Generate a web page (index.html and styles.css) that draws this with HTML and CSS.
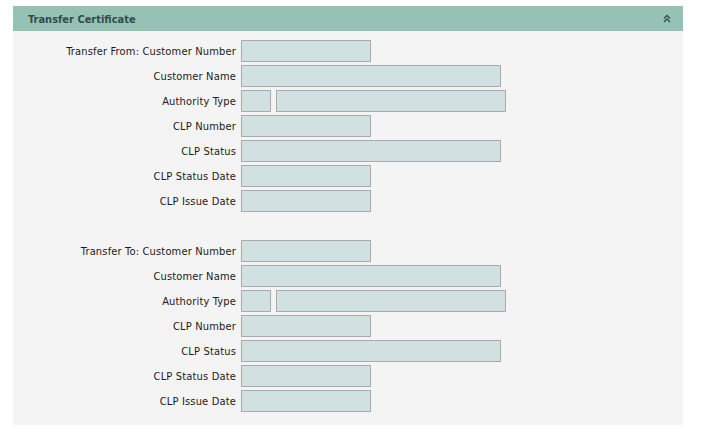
FILE: index.html
```html
<!DOCTYPE html>
<html>
<head>
<meta charset="utf-8">
<link rel="stylesheet" href="styles.css">
</head>
<body>
<div class="panel">
  <div class="panel-header">
    <span class="title">Transfer Certificate</span>
    <svg class="collapse" width="8" height="9" viewBox="0 0 8 9"><path d="M1 4.5 L4 1.5 L7 4.5 M1 8 L4 5 L7 8" fill="none" stroke="#2f4d47" stroke-width="1.4"/></svg>
  </div>
  <div class="panel-body">
    <div class="form">
      <div class="label">Transfer From: Customer Number</div><div class="fields"><span class="box w130"></span></div>
      <div class="label">Customer Name</div><div class="fields"><span class="box w260"></span></div>
      <div class="label">Authority Type</div><div class="fields"><span class="box w30"></span><span class="box w230"></span></div>
      <div class="label">CLP Number</div><div class="fields"><span class="box w130"></span></div>
      <div class="label">CLP Status</div><div class="fields"><span class="box w260"></span></div>
      <div class="label">CLP Status Date</div><div class="fields"><span class="box w130"></span></div>
      <div class="label">CLP Issue Date</div><div class="fields"><span class="box w130"></span></div>
      <div class="spacer"></div>
      <div class="label">Transfer To: Customer Number</div><div class="fields"><span class="box w130"></span></div>
      <div class="label">Customer Name</div><div class="fields"><span class="box w260"></span></div>
      <div class="label">Authority Type</div><div class="fields"><span class="box w30"></span><span class="box w230"></span></div>
      <div class="label">CLP Number</div><div class="fields"><span class="box w130"></span></div>
      <div class="label">CLP Status</div><div class="fields"><span class="box w260"></span></div>
      <div class="label">CLP Status Date</div><div class="fields"><span class="box w130"></span></div>
      <div class="label">CLP Issue Date</div><div class="fields"><span class="box w130"></span></div>
    </div>
  </div>
</div>
</body>
</html>
```
FILE: styles.css
```css
html, body {
  margin: 0;
  padding: 0;
  background: #ffffff;
}
body {
  font-family: "DejaVu Sans Condensed", "DejaVu Sans", sans-serif;
  font-stretch: condensed;
  font-size: 11px;
  color: #1a1a1a;
}
.panel {
  margin: 6px 0 0 13px;
  width: 670px;
  background: #f4f4f4;
}
.panel-header {
  height: 25px;
  background: #96c2b6;
  display: flex;
  align-items: center;
  justify-content: space-between;
  padding: 0 12px 0 15px;
}
.title {
  font-weight: bold;
  color: #2f4d47;
  font-size: 11px;
  padding-top: 1px;
}
.collapse {
  display: block;
}
.panel-body {
  padding: 9px 0 13px 0;
}
.form {
  display: grid;
  grid-template-columns: 223px 1fr;
  column-gap: 5px;
  row-gap: 3px;
}
.label {
  text-align: right;
  height: 22px;
  line-height: 24px;
  white-space: nowrap;
  letter-spacing: 0.17px;
}
.fields {
  display: flex;
  gap: 5px;
  height: 22px;
}
.spacer {
  grid-column: 1 / 3;
  height: 22px;
}
.box {
  display: block;
  box-sizing: border-box;
  height: 22px;
  background: #d1e0e0;
  border: 1px solid #a8aaab;
}
.w30 { width: 30px; }
.w130 { width: 130px; }
.w230 { width: 230px; }
.w260 { width: 260px; }
```
